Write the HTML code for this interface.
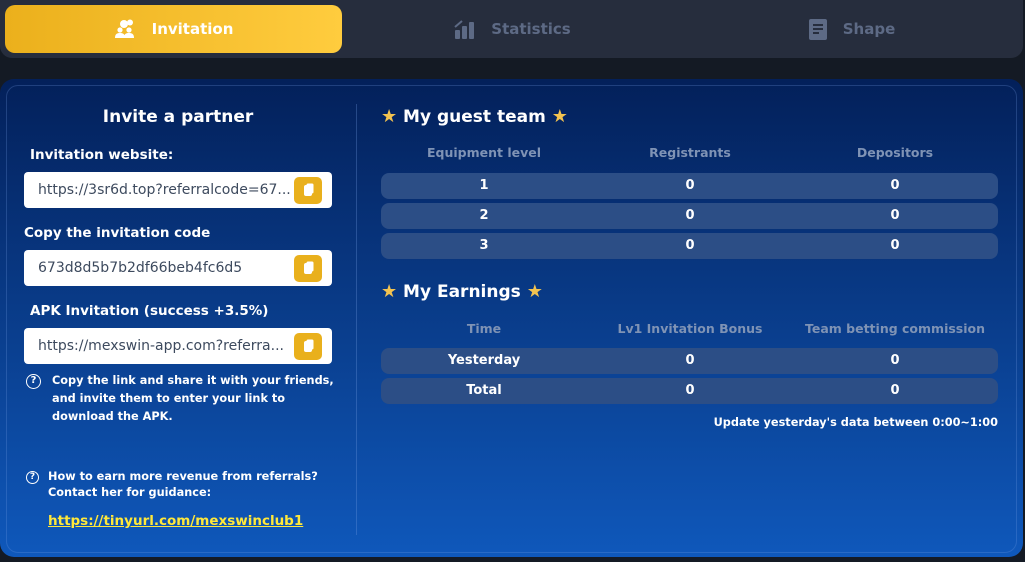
<!DOCTYPE html>
<html><head><style>
*{margin:0;padding:0;box-sizing:border-box}
html,body{width:1025px;height:562px;overflow:hidden}
body{background:#141a24;font-family:"DejaVu Sans","Liberation Sans",sans-serif;font-weight:bold;color:#fff;position:relative}
.tabs{position:absolute;left:0;top:0;width:1023px;height:58px;background:#262d3d;border-radius:0 0 12px 12px}
.tab{position:absolute;top:5px;height:48px;display:flex;align-items:center;justify-content:center;font-size:15px;color:#5d6a85}
.tab.act{left:5px;width:337px;background:linear-gradient(90deg,#ebb01c,#ffcc3e);border-radius:10px;color:#fff}
.tab svg{margin-right:16px}
.panel{position:absolute;left:0;top:79px;width:1023px;height:478px;border-radius:14px;background:linear-gradient(180deg,#03205a 0%,#0a3f8f 55%,#0f58bb 100%);overflow:hidden}
.inner{position:absolute;left:6px;top:6px;right:6px;bottom:4px;border:1px solid rgba(120,160,230,.25);border-radius:12px}
.div{position:absolute;left:356px;top:104px;width:1px;height:431px;background:rgba(120,160,230,.3)}
.a{position:absolute;white-space:nowrap}
.h{font-size:17px}
.lbl{font-size:13.5px}
.inp{position:absolute;left:24px;width:308px;height:36px;background:#fff;border-radius:4px;color:#3d4a5e;font-size:14px;font-weight:normal;padding-left:14px;line-height:36px;white-space:nowrap;overflow:hidden}
.cp{position:absolute;right:10px;top:5px;width:28px;height:27px;background:#e9b01c;border-radius:5px}
.cp:after{content:"";position:absolute;left:10px;top:8px;width:8px;height:11px;background:#fff;border-radius:2px;box-shadow:2px -2px 0 -0.5px #fff}
.q{position:absolute;width:15px;height:15px;border:1.5px solid #fff;border-radius:50%;font-size:10px;text-align:center;line-height:12px}
.th{position:absolute;font-size:12.5px;color:#7f93b5;font-weight:bold;text-align:center;width:206px}
.row{position:absolute;left:381px;width:617px;height:26px;background:#2c4e86;border-radius:8px;font-size:13px}
.row span{position:absolute;width:206px;text-align:center;line-height:26px}
.star{color:#f3c350;font-size:18px}
</style></head><body>
<div class="tabs">
<div class="tab act"><svg width="22" height="20" viewBox="0 0 22 20" fill="#fff"><circle cx="10" cy="5" r="4"/><circle cx="16" cy="3.5" r="3"/><circle cx="6" cy="11" r="2.6"/><circle cx="15" cy="11" r="2.6"/><path d="M1 19c0-4 2-5 5-5s5 1 5 5z"/><path d="M10 19c0-4 2-5 5-5s5 1 5 5z"/></svg>Invitation</div>
<div class="tab" style="left:342px;width:340px"><svg width="22" height="22" viewBox="0 0 22 22" fill="#5d6a85"><rect x="2" y="12" width="5" height="9" rx="1"/><rect x="9" y="8" width="5" height="13" rx="1"/><rect x="16" y="4" width="5" height="17" rx="1"/><path d="M2 9l7-6" stroke="#5d6a85" stroke-width="2"/></svg>Statistics</div>
<div class="tab" style="left:682px;width:340px"><svg width="18" height="21" viewBox="0 0 18 21"><rect x="0" y="0" width="18" height="21" rx="2" fill="#5d6a85"/><path d="M4 6h10M4 10h10M4 14h6" stroke="#262d3d" stroke-width="2"/></svg>Shape</div>
</div>
<div class="panel"><div class="inner"></div></div>
<div class="div"></div>
<div class="a h" style="left:24px;width:308px;text-align:center;top:107px">Invite a partner</div>
<div class="a lbl" style="left:30px;top:147px">Invitation website:</div>
<div class="inp" style="top:172px">https://3sr6d.top?referralcode=67...<div class="cp"></div></div>
<div class="a lbl" style="left:24px;top:225px">Copy the invitation code</div>
<div class="inp" style="top:250px">673d8d5b7b2df66beb4fc6d5<div class="cp"></div></div>
<div class="a lbl" style="left:30px;top:303px">APK Invitation (success +3.5%)</div>
<div class="inp" style="top:328px">https://mexswin-app.com?referra...<div class="cp"></div></div>
<div class="q" style="left:26px;top:374px">?</div>
<div class="a" style="left:52px;top:372px;font-size:11.3px;line-height:18px">Copy the link and share it with your friends,<br>and invite them to enter your link to<br>download the APK.</div>
<div class="q" style="left:26px;top:471px;width:13px;height:13px;font-size:9px;line-height:10px">?</div>
<div class="a" style="left:48px;top:469px;font-size:11.3px;line-height:16px">How to earn more revenue from referrals?<br>Contact her for guidance:</div>
<div class="a" style="left:48px;top:513px;font-size:13.5px;color:#ffe83a;text-decoration:underline">https://tinyurl.com/mexswinclub1</div>

<div class="a h" style="left:381px;top:106px"><span class="star">★</span> My guest team <span class="star">★</span></div>
<div class="th" style="left:381px;top:145px">Equipment level</div>
<div class="th" style="left:587px;top:145px">Registrants</div>
<div class="th" style="left:792px;top:145px">Depositors</div>
<div class="row" style="top:173px"><span style="left:0">1</span><span style="left:206px">0</span><span style="left:411px">0</span></div>
<div class="row" style="top:203px"><span style="left:0">2</span><span style="left:206px">0</span><span style="left:411px">0</span></div>
<div class="row" style="top:233px"><span style="left:0">3</span><span style="left:206px">0</span><span style="left:411px">0</span></div>
<div class="a h" style="left:381px;top:281px"><span class="star">★</span> My Earnings <span class="star">★</span></div>
<div class="th" style="left:381px;top:321px">Time</div>
<div class="th" style="left:587px;top:321px">Lv1 Invitation Bonus</div>
<div class="th" style="left:792px;top:321px">Team betting commission</div>
<div class="row" style="top:348px"><span style="left:0">Yesterday</span><span style="left:206px">0</span><span style="left:411px">0</span></div>
<div class="row" style="top:378px"><span style="left:0">Total</span><span style="left:206px">0</span><span style="left:411px">0</span></div>
<div class="a" style="right:27px;top:416px;font-size:11.3px">Update yesterday's data between 0:00~1:00</div>
</body></html>
